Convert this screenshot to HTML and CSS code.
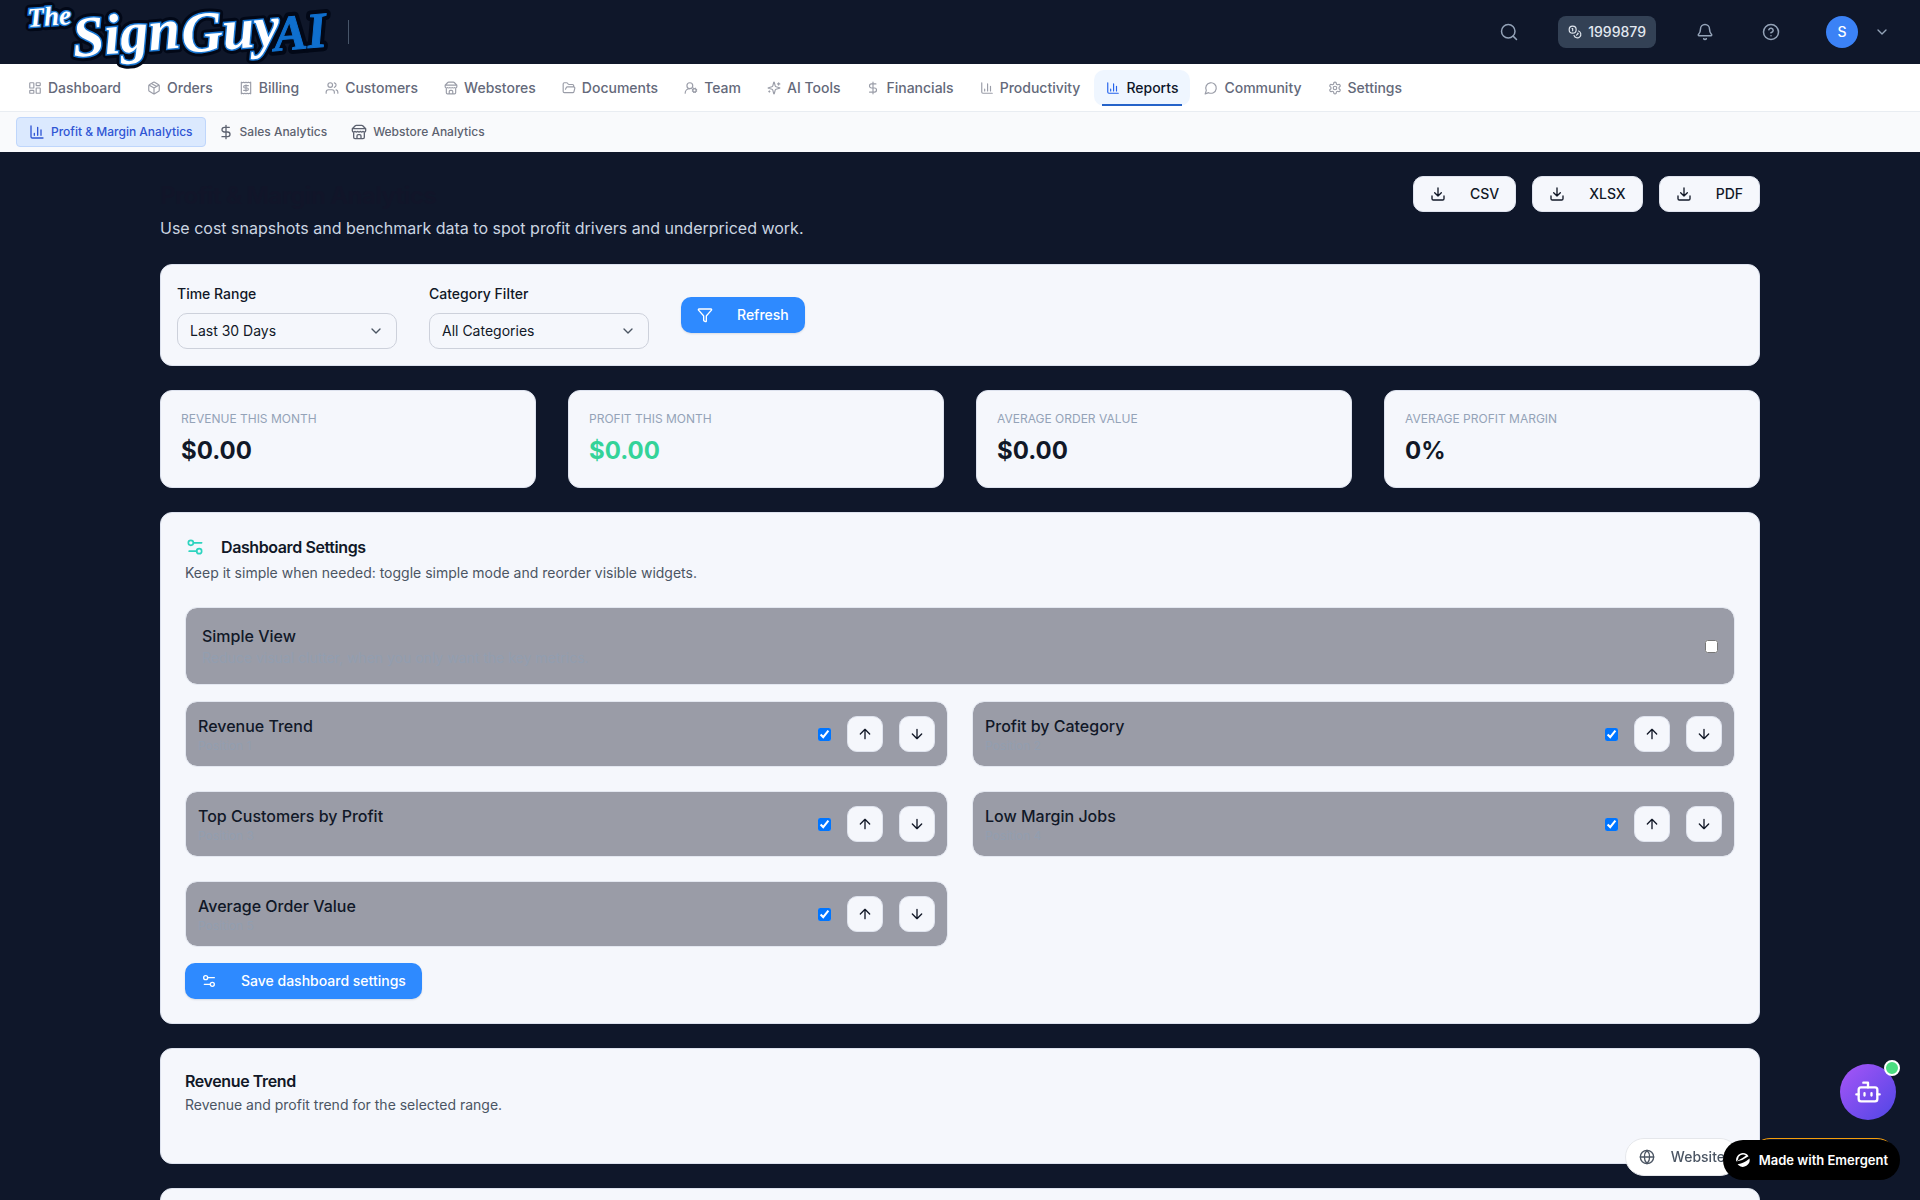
FILE: index.html
```html
<!DOCTYPE html>
<html lang="en">
<head>
<meta charset="utf-8">
<meta name="viewport" content="width=device-width, initial-scale=1">
<title>Profit &amp; Margin Analytics</title>
<link rel="stylesheet" href="styles.css">
</head>
<body>
<svg class="sprite" aria-hidden="true">
  <symbol id="i-dash" viewBox="0 0 24 24"><rect width="7" height="9" x="3" y="3" rx="1"/><rect width="7" height="5" x="14" y="3" rx="1"/><rect width="7" height="9" x="14" y="12" rx="1"/><rect width="7" height="5" x="3" y="16" rx="1"/></symbol>
  <symbol id="i-box" viewBox="0 0 24 24"><path d="M11 21.73a2 2 0 0 0 2 0l7-4A2 2 0 0 0 21 16V8a2 2 0 0 0-1-1.73l-7-4a2 2 0 0 0-2 0l-7 4A2 2 0 0 0 3 8v8a2 2 0 0 0 1 1.73zM12 22V12M3.3 7l8.7 5 8.7-5M7.5 4.27l9 5.15"/></symbol>
  <symbol id="i-bill" viewBox="0 0 24 24"><path d="M4 2v20l2-1 2 1 2-1 2 1 2-1 2 1 2-1 2 1V2l-2 1-2-1-2 1-2-1-2 1-2-1-2 1ZM16 8h-6a2 2 0 1 0 0 4h4a2 2 0 1 1 0 4H8M12 17.500V6.500"/></symbol>
  <symbol id="i-users" viewBox="0 0 24 24"><path d="M16 21v-2a4 4 0 0 0-4-4H6a4 4 0 0 0-4 4v2"/><circle cx="9" cy="7" r="4"/><path d="M22 21v-2a4 4 0 0 0-3-3.870M16 3.130a4 4 0 0 1 0 7.750"/></symbol>
  <symbol id="i-store" viewBox="0 0 24 24"><path d="m2 7 4.410-4.410A2 2 0 0 1 7.830 2h8.340a2 2 0 0 1 1.420.59L22 7M4 12v8a2 2 0 0 0 2 2h12a2 2 0 0 0 2-2v-8M15 22v-4a2 2 0 0 0-2-2h-2a2 2 0 0 0-2 2v4M2 7h20M22 7v3a2 2 0 0 1-2 2a2.700 2.700 0 0 1-1.590-.63.7.7 0 0 0-.82 0A2.700 2.700 0 0 1 16 12a2.700 2.700 0 0 1-1.590-.63.7.7 0 0 0-.82 0A2.700 2.700 0 0 1 12 12a2.700 2.700 0 0 1-1.590-.63.7.7 0 0 0-.82 0A2.700 2.700 0 0 1 8 12a2.700 2.700 0 0 1-1.590-.63.7.7 0 0 0-.82 0A2.700 2.700 0 0 1 4 12a2 2 0 0 1-2-2V7"/></symbol>
  <symbol id="i-folder" viewBox="0 0 24 24"><path d="m6 14 1.450-2.900A2 2 0 0 1 9.240 10H20a2 2 0 0 1 1.940 2.500l-1.550 6a2 2 0 0 1-1.940 1.500H4a2 2 0 0 1-2-2V5c0-1.100.9-2 2-2h3.930a2 2 0 0 1 1.660.9l.82 1.200a2 2 0 0 0 1.660.9H18a2 2 0 0 1 2 2v2"/></symbol>
  <symbol id="i-team" viewBox="0 0 24 24"><path d="M2 21a8 8 0 0 1 8-8"/><circle cx="10" cy="8" r="5"/><circle cx="18" cy="16" r="3"/><path d="m19.500 12.300-.4.900M16.900 18.800l-.3.900M21.700 17.400l-.9-.3M15.200 14.900l-.9-.3M21.700 14.600l-.9.300M15.200 17.100l-.9.300M19.500 19.700l-.4-.9M16.900 13.200l-.3-.9"/></symbol>
  <symbol id="i-spark" viewBox="0 0 24 24"><path d="M9.937 15.500A2 2 0 0 0 8.500 14.063l-6.135-1.582a.5.500 0 0 1 0-.962L8.500 9.936A2 2 0 0 0 9.937 8.500l1.582-6.135a.5.500 0 0 1 .963 0L14.063 8.500A2 2 0 0 0 15.500 9.937l6.135 1.581a.5.500 0 0 1 0 .964L15.500 14.063a2 2 0 0 0-1.437 1.437l-1.582 6.135a.5.500 0 0 1-.963 0zM20 3v4M22 5h-4M4 17v2M5 18H3"/></symbol>
  <symbol id="i-dollar" viewBox="0 0 24 24"><path d="M12 2v20M17 5H9.500a3.500 3.500 0 0 0 0 7h5a3.500 3.500 0 0 1 0 7H6"/></symbol>
  <symbol id="i-chart" viewBox="0 0 24 24"><path d="M3 3v16a2 2 0 0 0 2 2h16M18 17V9M13 17V5M8 17v-3"/></symbol>
  <symbol id="i-chat" viewBox="0 0 24 24"><path d="M7.900 20A9 9 0 1 0 4 16.100L2 22Z"/></symbol>
  <symbol id="i-gear" viewBox="0 0 24 24"><path d="M12.220 2h-.44a2 2 0 0 0-2 2v.18a2 2 0 0 1-1 1.730l-.43.25a2 2 0 0 1-2 0l-.15-.08a2 2 0 0 0-2.730.73l-.22.38a2 2 0 0 0 .73 2.730l.15.100a2 2 0 0 1 1 1.720v.51a2 2 0 0 1-1 1.740l-.15.090a2 2 0 0 0-.73 2.730l.22.380a2 2 0 0 0 2.730.73l.15-.08a2 2 0 0 1 2 0l.43.250a2 2 0 0 1 1 1.730V20a2 2 0 0 0 2 2h.44a2 2 0 0 0 2-2v-.18a2 2 0 0 1 1-1.730l.43-.25a2 2 0 0 1 2 0l.15.080a2 2 0 0 0 2.730-.73l.22-.39a2 2 0 0 0-.73-2.730l-.15-.08a2 2 0 0 1-1-1.740v-.5a2 2 0 0 1 1-1.740l.15-.09a2 2 0 0 0 .73-2.730l-.22-.38a2 2 0 0 0-2.730-.73l-.15.080a2 2 0 0 1-2 0l-.43-.25a2 2 0 0 1-1-1.730V4a2 2 0 0 0-2-2z"/><circle cx="12" cy="12" r="3"/></symbol>
  <symbol id="i-search" viewBox="0 0 24 24"><circle cx="11" cy="11" r="9"/><path d="m22 22-4.500-4.500"/></symbol>
  <symbol id="i-coins" viewBox="0 0 24 24"><circle cx="8" cy="8" r="6"/><path d="M18.090 10.370A6 6 0 1 1 10.340 18M7 6h1v4M16.710 13.880l.7.710-2.820 2.820"/></symbol>
  <symbol id="i-bell" viewBox="0 0 24 24"><path d="M10.270 21a2 2 0 0 0 3.460 0M3.260 15.330A1 1 0 0 0 4 17h16a1 1 0 0 0 .74-1.670C19.410 13.960 18 12.500 18 8A6 6 0 0 0 6 8c0 4.500-1.410 5.960-2.740 7.330"/></symbol>
  <symbol id="i-help" viewBox="0 0 24 24"><circle cx="12" cy="12" r="10"/><path d="M9.090 9a3 3 0 0 1 5.830 1c0 2-3 3-3 3M12 17h.01"/></symbol>
  <symbol id="i-down" viewBox="0 0 24 24"><path d="m6 9 6 6 6-6"/></symbol>
  <symbol id="i-download" viewBox="0 0 24 24"><path d="M21 15v4a2 2 0 0 1-2 2H5a2 2 0 0 1-2-2v-4M7 10l5 5 5-5M12 15V3"/></symbol>
  <symbol id="i-funnel" viewBox="0 0 24 24"><path d="M10 20a1 1 0 0 0 .55.900l2 1A1 1 0 0 0 14 21v-7a2 2 0 0 1 .52-1.340L21.740 4.670A1 1 0 0 0 21 3H3a1 1 0 0 0-.74 1.670l7.220 7.990A2 2 0 0 1 10 14z"/></symbol>
  <symbol id="i-sliders" viewBox="0 0 24 24"><path d="M20 7h-9M14 17H5"/><circle cx="17" cy="17" r="3"/><circle cx="7" cy="7" r="3"/></symbol>
  <symbol id="i-arrup" viewBox="0 0 24 24"><path d="m5 12 7-7 7 7M12 19V5"/></symbol>
  <symbol id="i-arrdn" viewBox="0 0 24 24"><path d="M12 5v14M19 12l-7 7-7-7"/></symbol>
  <symbol id="i-bot" viewBox="0 0 24 24"><path d="M12 8V4H8"/><rect width="16" height="12" x="4" y="8" rx="2"/><path d="M2 14h2M20 14h2M15 13v2M9 13v2"/></symbol>
  <symbol id="i-globe" viewBox="0 0 24 24"><circle cx="12" cy="12" r="10"/><path d="M12 2a14.500 14.500 0 0 0 0 20 14.500 14.500 0 0 0 0-20M2 12h20"/></symbol>
</svg>

<div class="app">
  <header class="topbar">
    <a class="brand" href="#" aria-label="The Sign Guy AI">
      <svg class="logo" viewBox="0 0 310 76" aria-hidden="true">
        <g class="logo-edge">
          <text class="logo-the" x="12" y="33" transform="rotate(-4 12 33)">The</text>
          <text class="logo-main" x="58" y="63" transform="rotate(-5 58 63)">Sign</text>
          <text class="logo-main" x="167" y="59" transform="rotate(-5 167 59)">Guy</text>
          <text class="logo-ai" x="259" y="57" transform="rotate(-5 259 57)">AI</text>
        </g>
        <g class="logo-white">
          <text class="logo-the" x="12" y="33" transform="rotate(-4 12 33)">The</text>
          <text class="logo-main" x="58" y="63" transform="rotate(-5 58 63)">Sign</text>
          <text class="logo-main" x="167" y="59" transform="rotate(-5 167 59)">Guy</text>
        </g>
        <text class="logo-ai logo-blue" x="259" y="57" transform="rotate(-5 259 57)">AI</text>
      </svg>
    </a>
    <span class="divider"></span>
    <div class="top-actions">
      <button class="icon-btn" type="button" aria-label="Search"><svg class="ic ic-18"><use href="#i-search"/></svg></button>
      <button class="credits" type="button"><svg class="ic ic-14"><use href="#i-coins"/></svg>1999879</button>
      <button class="icon-btn" type="button" aria-label="Notifications"><svg class="ic ic-18"><use href="#i-bell"/></svg></button>
      <button class="icon-btn" type="button" aria-label="Help"><svg class="ic ic-18"><use href="#i-help"/></svg></button>
      <button class="account" type="button"><span class="avatar">S</span><svg class="ic ic-16"><use href="#i-down"/></svg></button>
    </div>
  </header>

  <nav class="nav" aria-label="Main">
    <a href="#"><svg class="ic ic-14"><use href="#i-dash"/></svg>Dashboard</a>
    <a href="#"><svg class="ic ic-14"><use href="#i-box"/></svg>Orders</a>
    <a href="#"><svg class="ic ic-14"><use href="#i-bill"/></svg>Billing</a>
    <a href="#"><svg class="ic ic-14"><use href="#i-users"/></svg>Customers</a>
    <a href="#"><svg class="ic ic-14"><use href="#i-store"/></svg>Webstores</a>
    <a href="#"><svg class="ic ic-14"><use href="#i-folder"/></svg>Documents</a>
    <a href="#"><svg class="ic ic-14"><use href="#i-team"/></svg>Team</a>
    <a href="#"><svg class="ic ic-14"><use href="#i-spark"/></svg>AI Tools</a>
    <a href="#"><svg class="ic ic-14"><use href="#i-dollar"/></svg>Financials</a>
    <a href="#"><svg class="ic ic-14"><use href="#i-chart"/></svg>Productivity</a>
    <a class="active" href="#" aria-current="page"><svg class="ic ic-14"><use href="#i-chart"/></svg>Reports</a>
    <a href="#"><svg class="ic ic-14"><use href="#i-chat"/></svg>Community</a>
    <a href="#"><svg class="ic ic-14"><use href="#i-gear"/></svg>Settings</a>
  </nav>

  <nav class="subnav" aria-label="Reports">
    <a class="active" href="#" aria-current="page"><svg class="ic ic-16"><use href="#i-chart"/></svg>Profit &amp; Margin Analytics</a>
    <a href="#"><svg class="ic ic-16"><use href="#i-dollar"/></svg>Sales Analytics</a>
    <a href="#"><svg class="ic ic-16"><use href="#i-store"/></svg>Webstore Analytics</a>
  </nav>

  <main class="main">
    <div class="page">
      <div class="page-head">
        <div class="page-title">
          <h1>Profit &amp; Margin Analytics</h1>
          <p>Use cost snapshots and benchmark data to spot profit drivers and underpriced work.</p>
        </div>
        <div class="exports">
          <button class="btn btn-light" type="button"><svg class="ic ic-16"><use href="#i-download"/></svg>CSV</button>
          <button class="btn btn-light" type="button"><svg class="ic ic-16"><use href="#i-download"/></svg>XLSX</button>
          <button class="btn btn-light" type="button"><svg class="ic ic-16"><use href="#i-download"/></svg>PDF</button>
        </div>
      </div>

      <section class="card filters">
        <div class="field">
          <label for="range">Time Range</label>
          <div class="select"><select id="range"><option>Last 30 Days</option></select><svg class="ic ic-16"><use href="#i-down"/></svg></div>
        </div>
        <div class="field">
          <label for="category">Category Filter</label>
          <div class="select"><select id="category"><option>All Categories</option></select><svg class="ic ic-16"><use href="#i-down"/></svg></div>
        </div>
        <button class="btn btn-primary" type="button"><svg class="ic ic-16"><use href="#i-funnel"/></svg>Refresh</button>
      </section>

      <section class="stats">
        <div class="card stat"><span>REVENUE THIS MONTH</span><strong>$0.00</strong></div>
        <div class="card stat"><span>PROFIT THIS MONTH</span><strong class="good">$0.00</strong></div>
        <div class="card stat"><span>AVERAGE ORDER VALUE</span><strong>$0.00</strong></div>
        <div class="card stat"><span>AVERAGE PROFIT MARGIN</span><strong>0%</strong></div>
      </section>

      <section class="card panel">
        <div class="panel-head">
          <h2><svg class="ic ic-20 teal"><use href="#i-sliders"/></svg>Dashboard Settings</h2>
          <p>Keep it simple when needed: toggle simple mode and reorder visible widgets.</p>
        </div>
        <div class="panel-body">
          <div class="row row-simple">
            <div class="row-text"><label for="simple">Simple View</label><small>Reduce visual clutter, when you only want the key metrics.</small></div>
            <input id="simple" type="checkbox">
          </div>
          <div class="widgets">
            <div class="row">
              <div class="row-text"><label for="w1">Revenue Trend</label><small>Position 1</small></div>
              <input id="w1" type="checkbox" checked>
              <button class="btn-move" type="button" aria-label="Move up"><svg class="ic ic-16"><use href="#i-arrup"/></svg></button>
              <button class="btn-move" type="button" aria-label="Move down"><svg class="ic ic-16"><use href="#i-arrdn"/></svg></button>
            </div>
            <div class="row">
              <div class="row-text"><label for="w2">Profit by Category</label><small>Position 2</small></div>
              <input id="w2" type="checkbox" checked>
              <button class="btn-move" type="button" aria-label="Move up"><svg class="ic ic-16"><use href="#i-arrup"/></svg></button>
              <button class="btn-move" type="button" aria-label="Move down"><svg class="ic ic-16"><use href="#i-arrdn"/></svg></button>
            </div>
            <div class="row">
              <div class="row-text"><label for="w3">Top Customers by Profit</label><small>Position 3</small></div>
              <input id="w3" type="checkbox" checked>
              <button class="btn-move" type="button" aria-label="Move up"><svg class="ic ic-16"><use href="#i-arrup"/></svg></button>
              <button class="btn-move" type="button" aria-label="Move down"><svg class="ic ic-16"><use href="#i-arrdn"/></svg></button>
            </div>
            <div class="row">
              <div class="row-text"><label for="w4">Low Margin Jobs</label><small>Position 4</small></div>
              <input id="w4" type="checkbox" checked>
              <button class="btn-move" type="button" aria-label="Move up"><svg class="ic ic-16"><use href="#i-arrup"/></svg></button>
              <button class="btn-move" type="button" aria-label="Move down"><svg class="ic ic-16"><use href="#i-arrdn"/></svg></button>
            </div>
            <div class="row">
              <div class="row-text"><label for="w5">Average Order Value</label><small>Position 5</small></div>
              <input id="w5" type="checkbox" checked>
              <button class="btn-move" type="button" aria-label="Move up"><svg class="ic ic-16"><use href="#i-arrup"/></svg></button>
              <button class="btn-move" type="button" aria-label="Move down"><svg class="ic ic-16"><use href="#i-arrdn"/></svg></button>
            </div>
          </div>
          <button class="btn btn-primary" type="button"><svg class="ic ic-16"><use href="#i-sliders"/></svg>Save dashboard settings</button>
        </div>
      </section>

      <section class="card panel">
        <div class="panel-head">
          <h2>Revenue Trend</h2>
          <p>Revenue and profit trend for the selected range.</p>
        </div>
        <div class="panel-body"></div>
      </section>

      <section class="card panel">
        <div class="panel-head"></div>
        <div class="panel-body"></div>
      </section>
    </div>
  </main>
</div>

<button class="bot" type="button" aria-label="Open assistant"><svg class="ic ic-28"><use href="#i-bot"/></svg><span class="online"></span></button>
<div class="dock">
  <button class="dock-site" type="button"><svg class="ic ic-16"><use href="#i-globe"/></svg>Website</button>
  <span class="dock-promo"></span>
</div>
<a class="emergent" href="#">
  <svg viewBox="0 0 16 16" aria-hidden="true"><path d="M1.300 9.600A6.800 6.800 0 0 1 13.600 4.200Q8 8.400 1.300 9.600Q7.500 6.500 11 3.600A5 5 0 0 0 3 7.500"/><path d="M2.600 12.300Q9.500 11.200 14.500 6.600A6.800 6.800 0 0 1 3.600 13.300"/></svg>
  Made with Emergent
</a>
</body>
</html>
```
FILE: styles.css
```css
*, *::before, *::after { box-sizing: border-box; }

body {
  margin: 0;
  background: #0f172a;
  color: #111827;
  font-family: Inter, "Liberation Sans", sans-serif;
  font-size: 16px;
  line-height: 24px;
}

h1, h2, p { margin: 0; }
a { color: inherit; text-decoration: none; }
button, select { font: inherit; color: inherit; }
button { cursor: pointer; border: 0; background: none; padding: 0; }

.sprite { display: none; }
.ic {
  flex: none;
  fill: none;
  stroke: currentColor;
  stroke-width: 2;
  stroke-linecap: round;
  stroke-linejoin: round;
}
.ic-14 { width: 14px; height: 14px; }
.ic-16 { width: 16px; height: 16px; }
.ic-18 { width: 18px; height: 18px; }
.ic-20 { width: 20px; height: 20px; }
.ic-28 { width: 28px; height: 28px; }

.app { display: flex; flex-direction: column; height: 100vh; overflow: hidden; }

/* Top bar */
.topbar {
  display: flex;
  align-items: center;
  flex: none;
  height: 64px;
  padding: 0 24px 0 16px;
}
.brand { display: block; margin: -6px 22px -6px 0; height: 76px; position: relative; z-index: 2; }
.logo { display: block; width: 310px; height: 76px; overflow: visible; }
.logo text { font-family: "Liberation Serif", serif; font-style: italic; font-weight: 700; line-height: 1; }
.logo .logo-the { font-size: 27px; }
.logo .logo-main { font-size: 57px; }
.logo .logo-ai { font-size: 50px; }
.logo-edge { fill: #020817; stroke: #020817; stroke-width: 9; stroke-linejoin: round; }
.logo-white { fill: #fff; stroke: #1976d2; stroke-width: 3; paint-order: stroke; }
.logo-blue { fill: #0f6fce; stroke: #0f6fce; stroke-width: 1; }
.divider { width: 1px; height: 24px; background: #475569; }
.top-actions { display: flex; align-items: center; gap: 32px; margin-left: auto; color: #94a3b8; }
.icon-btn { display: flex; align-items: center; justify-content: center; width: 34px; height: 34px; }
.credits {
  display: flex;
  align-items: center;
  gap: 6px;
  height: 32px;
  padding: 0 10px;
  border-radius: 8px;
  background: #334155;
  color: #e2e8f0;
  font-size: 14px;
  font-weight: 500;
}
.account { display: flex; align-items: center; gap: 16px; padding: 0 6px; }
.avatar {
  display: flex;
  align-items: center;
  justify-content: center;
  width: 32px;
  height: 32px;
  border-radius: 50%;
  background: #3b82f6;
  color: #fff;
  font-size: 14px;
  font-weight: 500;
}

/* Navigation */
.nav {
  display: flex;
  gap: 2px;
  flex: none;
  height: 48px;
  padding: 6px 16px;
  background: #fff;
  border-bottom: 1px solid #e9edf2;
}
.nav a {
  display: flex;
  align-items: center;
  gap: 6px;
  height: 36px;
  padding: 0 12px;
  border-radius: 10px;
  color: #64697a;
  font-size: 14px;
  font-weight: 500;
}
.nav .ic { color: #9a9da8; }
.nav .active { position: relative; background: #eff6ff; color: #0f172a; }
.nav .active .ic { color: #2563eb; }
.nav .active::after {
  content: "";
  position: absolute;
  left: 8px;
  right: 8px;
  bottom: 0;
  height: 2px;
  background: #2563c9;
}
.subnav {
  display: flex;
  align-items: center;
  flex: none;
  height: 40px;
  padding: 0 16px;
  background: #f9fafc;
}
.subnav a {
  display: flex;
  align-items: center;
  gap: 6px;
  height: 30px;
  padding: 0 12px;
  border-radius: 4px;
  color: #5d6270;
  font-size: 12px;
  font-weight: 500;
}
.subnav .active { border: 1px solid #bfd6fb; background: #dbe9fe; color: #2f55d4; }

/* Page */
.main { flex: 1; min-height: 0; overflow: hidden; padding: 24px 160px; }
.page { display: flex; flex-direction: column; gap: 24px; max-width: 1600px; margin: 0 auto; }
.page-head { display: flex; justify-content: space-between; align-items: flex-start; }
.page-title h1 {
  color: #111529;
  font-size: 24px;
  line-height: 40px;
  font-weight: 700;
  letter-spacing: -0.025em;
}
.page-title p { color: #cbd5e1; }
.exports { display: flex; gap: 16px; }

.btn {
  display: inline-flex;
  align-items: center;
  gap: 24px;
  height: 36px;
  padding: 0 16px;
  border-radius: 10px;
  font-size: 14px;
  font-weight: 500;
}
.btn-light { border: 1px solid #dfe3ee; background: #f5f7fc; color: #111827; }
.btn-primary { background: #2e8aff; color: #fff; box-shadow: 0 1px 2px rgba(15, 23, 42, .12); }

.card { background: #f5f7fc; border: 1px solid #dde2ee; border-radius: 12px; }
.filters { display: flex; align-items: center; gap: 32px; padding: 16px; }
.field { display: flex; flex-direction: column; gap: 6px; width: 220px; }
.field label { font-size: 14px; line-height: 26px; font-weight: 500; }
.select { position: relative; display: flex; align-items: center; }
.select select {
  appearance: none;
  width: 100%;
  height: 36px;
  padding: 0 36px 0 12px;
  border: 1px solid #cdd1db;
  border-radius: 10px;
  background: transparent;
  font-size: 14px;
}
.select .ic { position: absolute; right: 13px; color: #4b5563; pointer-events: none; }

.stats { display: grid; grid-template-columns: repeat(4, 1fr); gap: 32px; }
.stat { display: flex; flex-direction: column; gap: 8px; padding: 20px; }
.stat span { color: #94a3b8; font-size: 12px; line-height: 16px; }
.stat strong { font-size: 24px; line-height: 32px; font-weight: 700; }
.stat .good { color: #34d399; }

.panel { padding: 24px; }
.panel-head { display: flex; flex-direction: column; gap: 6px; margin-bottom: 24px; }
.panel-head h2 {
  display: flex;
  align-items: center;
  gap: 16px;
  font-size: 16px;
  line-height: 16px;
  font-weight: 600;
  letter-spacing: -0.025em;
}
.panel-head p { color: #4b5563; font-size: 14px; line-height: 20px; }
.teal { color: #2dd4bf; }
.panel-body { display: flex; flex-direction: column; align-items: flex-start; gap: 16px; }

.row {
  display: flex;
  align-items: center;
  gap: 16px;
  width: 100%;
  padding: 12px;
  border: 1px solid #e3e7f0;
  border-radius: 12px;
  background: #9a9ca7;
  background-clip: padding-box;
}
.row-text { display: flex; flex-direction: column; margin-right: auto; }
.row-text label { font-weight: 500; }
.row-text small { color: #929eb0; font-size: 12px; line-height: 16px; }
.row-simple { padding: 16px; }
.row-simple small { font-size: 14px; line-height: 20px; }
.row input { flex: none; width: 13px; height: 13px; margin: 0; }
.widgets { display: grid; grid-template-columns: 1fr 1fr; gap: 24px; width: 100%; }
.btn-move {
  display: flex;
  align-items: center;
  justify-content: center;
  width: 36px;
  height: 36px;
  border: 1px solid #dfe3ee;
  border-radius: 10px;
  background: #f5f7fc;
  color: #111827;
}

/* Floating controls */
.bot {
  position: fixed;
  right: 24px;
  bottom: 80px;
  display: flex;
  align-items: center;
  justify-content: center;
  width: 56px;
  height: 56px;
  border-radius: 50%;
  background: linear-gradient(135deg, #a855f7, #4f46e5);
  color: #fff;
}
.online {
  position: absolute;
  top: -4px;
  right: -4px;
  width: 16px;
  height: 16px;
  border: 2px solid #fff;
  border-radius: 50%;
  background: #4ade80;
}
.dock { position: fixed; right: 24px; bottom: 24px; display: flex; gap: 12px; }
.dock-site {
  display: flex;
  align-items: center;
  gap: 16px;
  height: 38px;
  padding: 0 13px;
  border: 1px solid #e5e7eb;
  border-radius: 19px;
  background: #fff;
  color: #4b5563;
  font-size: 14px;
  font-weight: 500;
}
.dock-promo { width: 145px; height: 38px; border: 1px solid #f59e0b; border-radius: 19px; }
.emergent {
  position: fixed;
  right: 20px;
  bottom: 20px;
  display: flex;
  align-items: center;
  gap: 8px;
  height: 40px;
  padding: 0 12px;
  border-radius: 20px;
  background: #000;
  color: #fff;
  font-size: 13px;
  font-weight: 600;
}
.emergent svg { width: 16px; height: 16px; fill: #fff; }
```
